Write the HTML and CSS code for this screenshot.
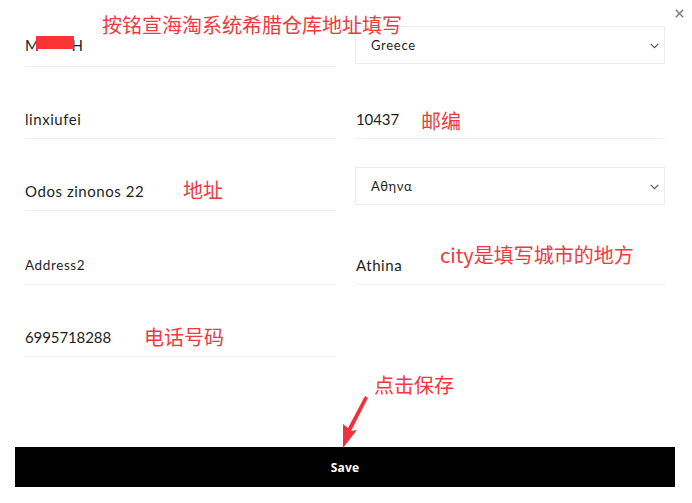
FILE: index.html
```html
<!DOCTYPE html>
<html lang="en">
<head>
<meta charset="utf-8">
<title>Address</title>
<link rel="stylesheet" href="styles.css">
</head>
<body>
<div class="modal">
  <button class="close" aria-label="close">
    <svg width="9" height="9" viewBox="0 0 9 9"><path d="M0.8 0.8L8.2 8.2M8.2 0.8L0.8 8.2" stroke="#7a7a7a" stroke-width="1.5" fill="none"/></svg>
  </button>
  <form class="grid">
    <div class="cell r1"><div class="field">M<span class="redact"></span>H</div></div>
    <div class="cell r1"><div class="select s1"><span>Greece</span><svg class="chev" width="9" height="6" viewBox="0 0 9 6"><path d="M0.7 0.8L4.5 4.6L8.3 0.8" stroke="#555" stroke-width="1.2" fill="none"/></svg></div></div>

    <div class="cell"><div class="field">linxiufei</div></div>
    <div class="cell"><div class="field num">10437</div></div>

    <div class="cell"><div class="field">Odos zinonos 22</div></div>
    <div class="cell"><div class="select s2"><span>Αθηνα</span><svg class="chev" width="9" height="6" viewBox="0 0 9 6"><path d="M0.7 0.8L4.5 4.6L8.3 0.8" stroke="#555" stroke-width="1.2" fill="none"/></svg></div></div>

    <div class="cell r4"><div class="field small">Address2</div></div>
    <div class="cell r4"><div class="field">Athina</div></div>

    <div class="cell"><div class="field num">6995718288</div></div>
    <div class="cell"></div>
  </form>
  <div class="actions"><button class="save" type="button">Save</button></div>

  <div class="note n-title">按铭宣海淘系统希腊仓库地址填写</div>
  <div class="note n-zip">邮编</div>
  <div class="note n-addr">地址</div>
  <div class="note n-city">city是填写城市的地方</div>
  <div class="note n-phone">电话号码</div>
  <div class="note n-save">点击保存</div>
  <svg class="arrow" width="692" height="503" viewBox="0 0 692 503"><polygon points="365,396 368,398 351,431 357,430 343,448 343,424 348,428" fill="#f0303a"/></svg>
</div>
</body>
</html>
```

FILE: styles.css
```css
html, body {
  margin: 0;
  padding: 0;
  background: #ffffff;
}
.modal {
  position: relative;
  width: 692px;
  height: 503px;
  box-sizing: border-box;
  padding: 0 27px 0 24px;
  font-family: Lato, "Open Sans", "Liberation Sans", sans-serif;
  color: #1e1e1e;
}
.close {
  position: absolute;
  left: 675px;
  top: 9px;
  width: 9px;
  height: 9px;
  padding: 0;
  border: 0;
  background: none;
  line-height: 0;
}
.grid {
  display: grid;
  grid-template-columns: 312px 310px;
  grid-template-rows: 67px 72px 72px 74px 72px;
  column-gap: 19px;
  margin: 0;
}
.cell {
  display: flex;
  flex-direction: column;
  justify-content: flex-end;
}
.field {
  height: 38px;
  display: flex;
  align-items: center;
  padding-left: 1px;
  font-size: 15px;
  letter-spacing: 0.55px;
  border-bottom: 1px solid #f3eded;
}
.field.num {
  letter-spacing: -0.1px;
}
.r1 .field {
  line-height: 16px;
  height: 29px;
  padding-top: 11px;
  align-items: flex-start;
}
.field.small {
  font-size: 13.5px;
  letter-spacing: 0.6px;
}
.redact {
  display: inline-block;
  width: 38px;
  height: 13px;
  background: #fa3434;
  margin: 0 -3px 0 -3px;
  position: relative;
  top: -1px;
}
.select {
  box-sizing: border-box;
  height: 38px;
  border: 1px solid #ececec;
  display: flex;
  align-items: center;
  justify-content: space-between;
  padding: 0 5px 0 15px;
  font-size: 13px;
  letter-spacing: 0.7px;
}
.s1 { margin-bottom: 3px; }
.s2 { margin-bottom: 6px; }
.chev { margin-top: 1px; }
.actions {
  display: flex;
  margin: 90px -10px 0 -9px;
}
.save {
  flex: 1;
  height: 40px;
  background: #000;
  color: #fff;
  border: 0;
  font-family: "Open Sans", "Liberation Sans", sans-serif;
  font-weight: 700;
  font-size: 12px;
  letter-spacing: 0.2px;
}
.note {
  position: absolute;
  font-family: "Noto Sans CJK SC", sans-serif;
  font-size: 20px;
  line-height: 20px;
  color: #ee3a3e;
  white-space: nowrap;
}
.n-title { left: 102px; top: 15px; }
.n-zip { left: 421px; top: 111px; }
.n-addr { left: 183px; top: 180px; }
.n-city { left: 440px; top: 245px; }
.n-phone { left: 144px; top: 327px; }
.n-save { left: 374px; top: 375px; }
.arrow {
  position: absolute;
  left: 0;
  top: 0;
  pointer-events: none;
}
```
